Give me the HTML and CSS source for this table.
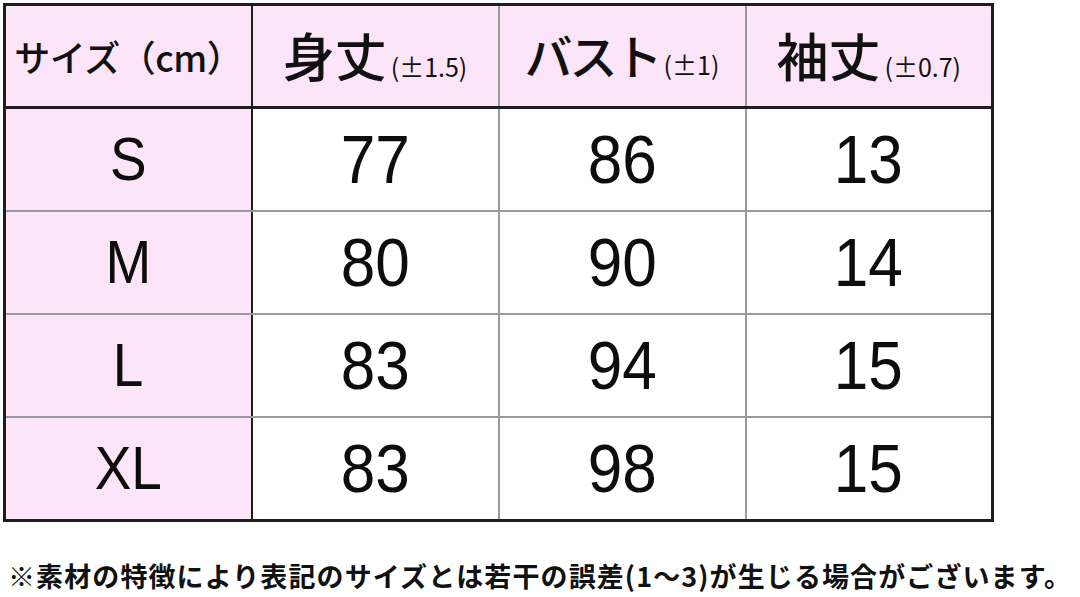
FILE: index.html
```html
<!DOCTYPE html>
<html lang="ja">
<head>
<meta charset="utf-8">
<link rel="stylesheet" href="styles.css">
</head>
<body>
<div class="page">
  <table class="size-table">
    <thead>
      <tr>
        <th class="col-size"><span class="h-size">サイズ（cm）</span></th>
        <th><span class="h-big">身丈</span><span class="h-small">(±1.5)</span></th>
        <th><span class="h-big kana">バスト</span><span class="h-small">(±1)</span></th>
        <th><span class="h-big">袖丈</span><span class="h-small">(±0.7)</span></th>
      </tr>
    </thead>
    <tbody>
      <tr><td class="col-size"><span class="num">S</span></td><td><span class="num">77</span></td><td><span class="num">86</span></td><td><span class="num">13</span></td></tr>
      <tr><td class="col-size"><span class="num">M</span></td><td><span class="num">80</span></td><td><span class="num">90</span></td><td><span class="num">14</span></td></tr>
      <tr><td class="col-size"><span class="num">L</span></td><td><span class="num">83</span></td><td><span class="num">94</span></td><td><span class="num">15</span></td></tr>
      <tr><td class="col-size"><span class="num">XL</span></td><td><span class="num">83</span></td><td><span class="num">98</span></td><td><span class="num">15</span></td></tr>
    </tbody>
  </table>
  <p class="note">※素材の特徴により表記のサイズとは若干の誤差(1～3)が生じる場合がございます。</p>
</div>
</body>
</html>
```

FILE: styles.css
```css
html, body {
  margin: 0;
  padding: 0;
  background: #ffffff;
}

.page {
  padding: 3px 0 0 3px;
  font-family: "Noto Sans CJK JP", "Liberation Sans", sans-serif;
  color: #111;
}

.size-table {
  border-collapse: collapse;
  table-layout: fixed;
  width: 991px;
  border: 3px solid #1e1e1e;
}

.size-table th,
.size-table td {
  border: 2px solid #9a9a9a;
  padding: 0;
  text-align: center;
  vertical-align: middle;
  height: 101px;
}

.size-table thead th {
  height: 100px;
  background: #fce4f9;
  border-bottom: 3px solid #1e1e1e;
  font-weight: 400;
  white-space: nowrap;
}

.size-table .col-size {
  background: #fce4f9;
  border-right: 2px solid #1e1e1e;
}

.h-size {
  font-size: 36px;
  letter-spacing: -0.5px;
  font-weight: 500;
}

.h-big {
  font-size: 52px;
  font-weight: 500;
  line-height: 1;
}

.h-big.kana {
  font-size: 48px;
  font-weight: 500;
  letter-spacing: -3px;
}

.h-small {
  font-size: 25px;
  font-weight: 400;
  letter-spacing: 0;
  margin-left: 4px;
}

.num {
  display: inline-block;
  font-family: "Liberation Sans", Arial, sans-serif;
  font-size: 69px;
  line-height: 1;
  transform: scaleX(0.9);
  color: #0d0d0d;
}

.col-size .num {
  font-size: 61px;
}

.note {
  margin: 36px 0 0 5px;
  font-size: 27px;
  font-weight: 700;
  line-height: 36px;
  white-space: nowrap;
  letter-spacing: 1.1px;
  color: #111;
}
```
